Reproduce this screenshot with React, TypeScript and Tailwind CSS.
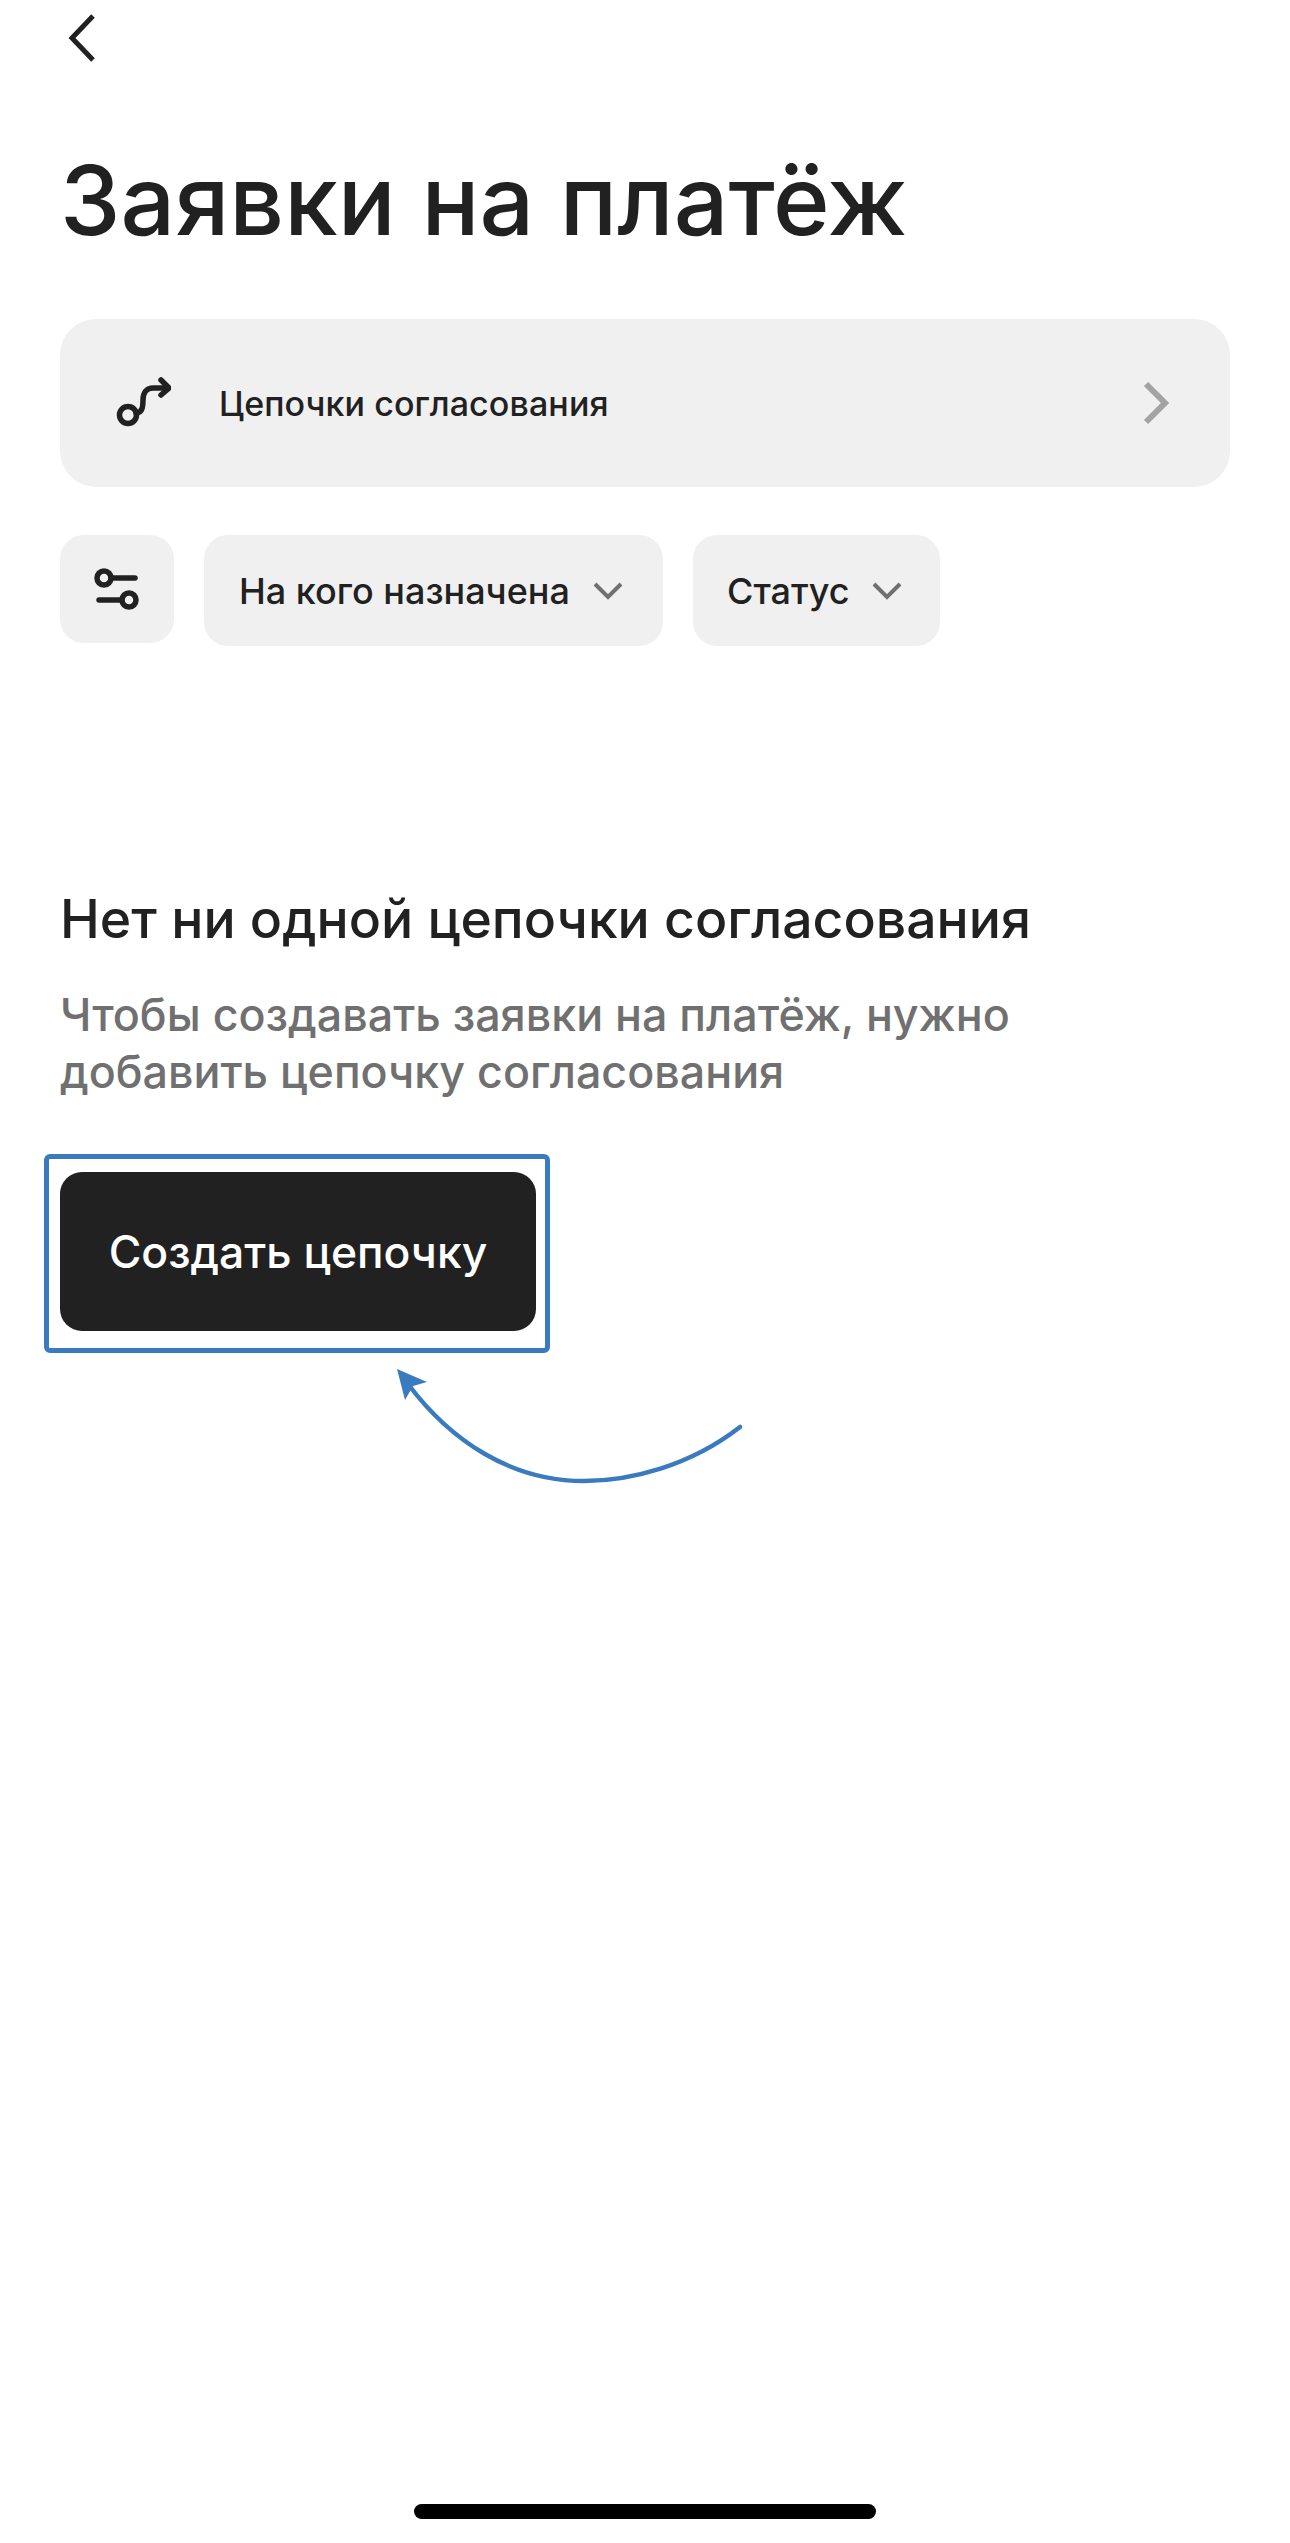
export default function App() {
  const font = { fontFamily: 'Inter, "Liberation Sans", sans-serif' };
  return (
    <div style={font} className="relative h-[2543px] w-[1290px] overflow-hidden bg-white text-[#212121]">
      <div className="flex flex-col px-[60px]">
        <svg width="40" height="56" viewBox="0 0 40 56" className="mt-[10px] ml-[4px]" fill="none">
          <path d="M29 6 L8 28 L29 50" stroke="#212121" strokeWidth="5" />
        </svg>
        <h1 className="mt-[76px] text-[96.4px] leading-[116px] font-medium">Заявки на платёж</h1>
        <div className="mt-[61px] flex h-[168px] w-[1170px] items-center rounded-[36px] bg-[#f0f0f0] pr-[58px] pl-[55px]">
          <svg width="56" height="56" viewBox="0 0 56 56" fill="none" stroke="#212121" strokeWidth="5.5" className="shrink-0">
            <circle cx="13" cy="40" r="8.5" />
            <path d="M21 38 C28 38 28 30 28 25 C28 17 32 13 38 13 L52 13" strokeLinecap="round" />
            <path d="M46 5 L54 13 L46 20" strokeLinecap="round" />
          </svg>
          <span className="ml-[48px] text-[34px] font-medium tracking-[0.1px]">Цепочки согласования</span>
          <svg width="30" height="44" viewBox="0 0 30 44" fill="none" className="ml-auto">
            <path d="M4 3 L23 22 L4 41" stroke="#a3a3a3" strokeWidth="6" />
          </svg>
        </div>
        <div className="mt-[48px] flex items-start gap-[30px]">
          <div className="flex h-[108px] w-[114px] items-center justify-center rounded-[24px] bg-[#f0f0f0]">
            <svg width="46" height="44" viewBox="0 0 46 44" fill="none" stroke="#212121" strokeWidth="5.5" strokeLinecap="round">
              <circle cx="10" cy="11" r="7" />
              <path d="M17 11 L41 11" />
              <circle cx="35" cy="33" r="7" />
              <path d="M5 33 L28 33" />
            </svg>
          </div>
          <div className="flex h-[111px] w-[459px] items-center rounded-[24px] bg-[#f0f0f0] pl-[35px]">
            <span className="text-[36px] font-medium">На кого назначена</span>
            <svg width="30" height="18" viewBox="0 0 30 18" fill="none" className="ml-[23px]">
              <path d="M2 2 L15 15 L28 2" stroke="#707070" strokeWidth="4" />
            </svg>
          </div>
          <div className="flex h-[111px] w-[247px] items-center rounded-[24px] bg-[#f0f0f0] pl-[34px]">
            <span className="text-[36px] font-medium">Статус</span>
            <svg width="30" height="18" viewBox="0 0 30 18" fill="none" className="ml-[22px]">
              <path d="M2 2 L15 15 L28 2" stroke="#707070" strokeWidth="4" />
            </svg>
          </div>
        </div>
        <h2 className="mt-[243px] text-[53.5px] leading-[60px] font-medium">Нет ни одной цепочки согласования</h2>
        <p className="mt-[38px] text-[44.8px] leading-[57px] font-medium text-[#707070]">
          Чтобы создавать заявки на платёж, нужно
          <br />
          добавить цепочку согласования
        </p>
        <button className="mt-[71px] flex h-[159px] w-[476px] items-center justify-center rounded-[22px] bg-[#212121] pt-[2px] text-[44.5px] font-medium text-white">
          Создать цепочку
        </button>
      </div>

      <div className="absolute left-[44px] top-[1154px] h-[199px] w-[506px] rounded-[6px] border-[5px] border-[#3a7bc0]" />
      <svg className="absolute left-0 top-0" width="1290" height="2543" viewBox="0 0 1290 2543" fill="none">
        <path d="M740 1427 C690 1466 630 1481 584 1481 C510 1481 450 1440 408 1384" stroke="#3a7bc0" strokeWidth="4.5" strokeLinecap="round" />
        <path d="M397 1369 L427 1382 L413 1386 L405 1400 Z" fill="#3a7bc0" />
      </svg>

      <div className="absolute bottom-[24px] left-[414px] h-[15px] w-[462px] rounded-full bg-black" />
    </div>
  );
}
